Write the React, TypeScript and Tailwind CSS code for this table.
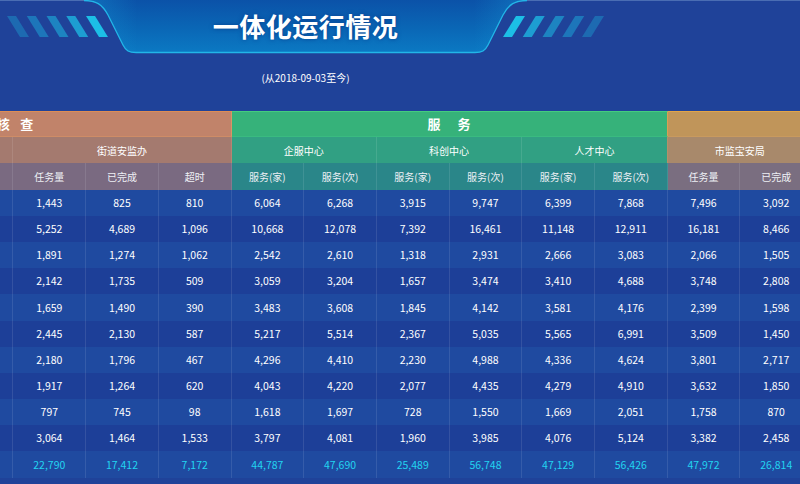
import React from "react";

const FONT = { fontFamily: '"Noto Sans CJK SC", "Noto Sans", sans-serif' };

const rows: string[][] = [
  ["1,443", "825", "810", "6,064", "6,268", "3,915", "9,747", "6,399", "7,868", "7,496", "3,092"],
  ["5,252", "4,689", "1,096", "10,668", "12,078", "7,392", "16,461", "11,148", "12,911", "16,181", "8,466"],
  ["1,891", "1,274", "1,062", "2,542", "2,610", "1,318", "2,931", "2,666", "3,083", "2,066", "1,505"],
  ["2,142", "1,735", "509", "3,059", "3,204", "1,657", "3,474", "3,410", "4,688", "3,748", "2,808"],
  ["1,659", "1,490", "390", "3,483", "3,608", "1,845", "4,142", "3,581", "4,176", "2,399", "1,598"],
  ["2,445", "2,130", "587", "5,217", "5,514", "2,367", "5,035", "5,565", "6,991", "3,509", "1,450"],
  ["2,180", "1,796", "467", "4,296", "4,410", "2,230", "4,988", "4,336", "4,624", "3,801", "2,717"],
  ["1,917", "1,264", "620", "4,043", "4,220", "2,077", "4,435", "4,279", "4,910", "3,632", "1,850"],
  ["797", "745", "98", "1,618", "1,697", "728", "1,550", "1,669", "2,051", "1,758", "870"],
  ["3,064", "1,464", "1,533", "3,797", "4,081", "1,960", "3,985", "4,076", "5,124", "3,382", "2,458"],
];
const total = ["22,790", "17,412", "7,172", "44,787", "47,690", "25,489", "56,748", "47,129", "56,426", "47,972", "26,814"];

const subLabels = [
  "", "", "",
  "任务量", "已完成", "超时",
  "服务(家)", "服务(次)", "服务(家)", "服务(次)", "服务(家)", "服务(次)",
  "任务量", "已完成", "", "",
];

function Banner() {
  const leftX = [7, 26.75, 46.5, 66.25, 86];
  const leftOp = [0.3, 0.4, 0.5, 0.7, 0.95];
  const d =
    "M84 0 C96 0 102 4 108 15 L123 45 C126 51 129 52.5 136 52.5 L475 52.5 C482 52.5 485 51 488 45 L503 15 C509 4 515 0 527 0 Z";
  return (
    <svg className="absolute inset-0" width="611" height="54" viewBox="0 0 611 54">
      <defs>
        <linearGradient id="bn" x1="0" y1="0" x2="0" y2="1">
          <stop offset="0" stopColor="#0b52a8" />
          <stop offset="0.55" stopColor="#0a67b6" />
          <stop offset="1" stopColor="#0b79c3" />
        </linearGradient>
        <linearGradient id="bnh" x1="0" y1="0" x2="1" y2="0">
          <stop offset="0" stopColor="#1aa8e0" stopOpacity="0.35" />
          <stop offset="0.12" stopColor="#1aa8e0" stopOpacity="0" />
          <stop offset="0.88" stopColor="#1aa8e0" stopOpacity="0" />
          <stop offset="1" stopColor="#1aa8e0" stopOpacity="0.35" />
        </linearGradient>
      </defs>
      <path d={d} fill="url(#bn)" />
      <path d={d} fill="url(#bnh)" />
      <path
        d="M84 0.5 C96 0.5 102 4 108 15 L123 45 C126 51 129 52.5 136 52.5 L475 52.5 C482 52.5 485 51 488 45 L503 15 C509 4 515 0.5 527 0.5"
        fill="none"
        stroke="#22b6e8"
        strokeWidth="1.3"
      />
      {leftX.map((x, i) => (
        <polygon
          key={"l" + i}
          points={`${x},16 ${x + 9},16 ${x + 22},37 ${x + 13},37`}
          fill="#1cc6ea"
          fillOpacity={leftOp[i]}
        />
      ))}
      {leftX.map((x, i) => (
        <polygon
          key={"r" + i}
          points={`${611 - x},16 ${611 - x - 9},16 ${611 - x - 22},37 ${611 - x - 13},37`}
          fill="#1cc6ea"
          fillOpacity={leftOp[i]}
        />
      ))}
    </svg>
  );
}

export default function App() {
  const cellBase = "flex items-center justify-center border-r border-white/10 whitespace-nowrap";
  return (
    <div className="relative w-[800px] h-[484px] overflow-hidden bg-[#1f4299] text-white" style={FONT}>
      <div className="h-px bg-[#4a6db3]" />
      <div className="w-[611px] h-[110px] flex flex-col items-center">
        <div className="relative w-[611px] h-[53px] flex items-center justify-center mt-[-1px]">
          <Banner />
          <span
            className="relative text-[26px] font-bold leading-none tracking-[0.5px] mt-[-2px]"
            style={{ textShadow: "0 0 4px rgba(0,40,120,0.6)" }}
          >
            一体化运行情况
          </span>
        </div>
        <div className="mt-[20px] text-[10px] leading-none text-white">(从2018-09-03至今)</div>
      </div>

      <div className="w-[800px] overflow-hidden">
        <div className="grid grid-cols-[repeat(16,72.7px)] auto-rows-[26.2px] ml-[-204.6px] text-[10px]">
          {/* Row 1: groups */}
          <div className="col-span-6 flex items-center justify-center gap-[10.5px] pl-[4px] bg-[#c1836a] border-t border-[#dd8d55] border-b border-b-[#cf8c66] border-r border-r-[#d99565] text-[13px] font-bold">
            <span>核</span>
            <span>查</span>
          </div>
          <div className="col-span-6 flex items-center justify-center gap-[17px] bg-[#36b27a] border-t border-[#44cc7e] border-b border-b-[#3abb80] border-r border-r-[#d7a055] text-[13px] font-bold">
            <span>服</span>
            <span>务</span>
          </div>
          <div className="col-span-4 bg-[#c0955a] border-t border-[#e2a548] border-b border-b-[#c99a5e]" />

          {/* Row 2: sub groups */}
          <div className={`col-span-3 ${cellBase} bg-[#a47a6f]`} />
          <div className={`col-span-3 ${cellBase} bg-[#a47a6f] border-r-[#b58572]`}>街道安监办</div>
          <div className={`col-span-2 ${cellBase} bg-[#31a083]`}>企服中心</div>
          <div className={`col-span-2 ${cellBase} bg-[#31a083]`}>科创中心</div>
          <div className={`col-span-2 ${cellBase} bg-[#31a083] border-r-[#b3906a]`}>人才中心</div>
          <div className={`col-span-2 ${cellBase} bg-[#a8896b]`}>市监宝安局</div>
          <div className={`col-span-2 ${cellBase} bg-[#a8896b]`} />

          {/* Row 3: labels */}
          {subLabels.map((l, i) => {
            const bg = i < 6 ? "bg-[#7a6a81]" : i < 12 ? "bg-[#2a8689]" : "bg-[#7a6e80]";
            return (
              <div key={"s" + i} className={`${cellBase} ${bg} text-[#eef0f5]`}>
                {l}
              </div>
            );
          })}

          {/* Data rows */}
          {[...rows, total].map((r, ri) => {
            const bg = ri % 2 === 0 ? "bg-[#1f4aa0]" : "bg-[#1d3f98]";
            const isTotal = ri === rows.length;
            const cells = ["", "", "", ...r, "", ""];
            return cells.map((v, ci) => (
              <div
                key={`d${ri}-${ci}`}
                className={`${cellBase} ${bg} ${isTotal ? "text-[#22d4f0]" : "text-white"} text-[10.5px]`}
              >
                {v}
              </div>
            ));
          })}
        </div>
      </div>
    </div>
  );
}
